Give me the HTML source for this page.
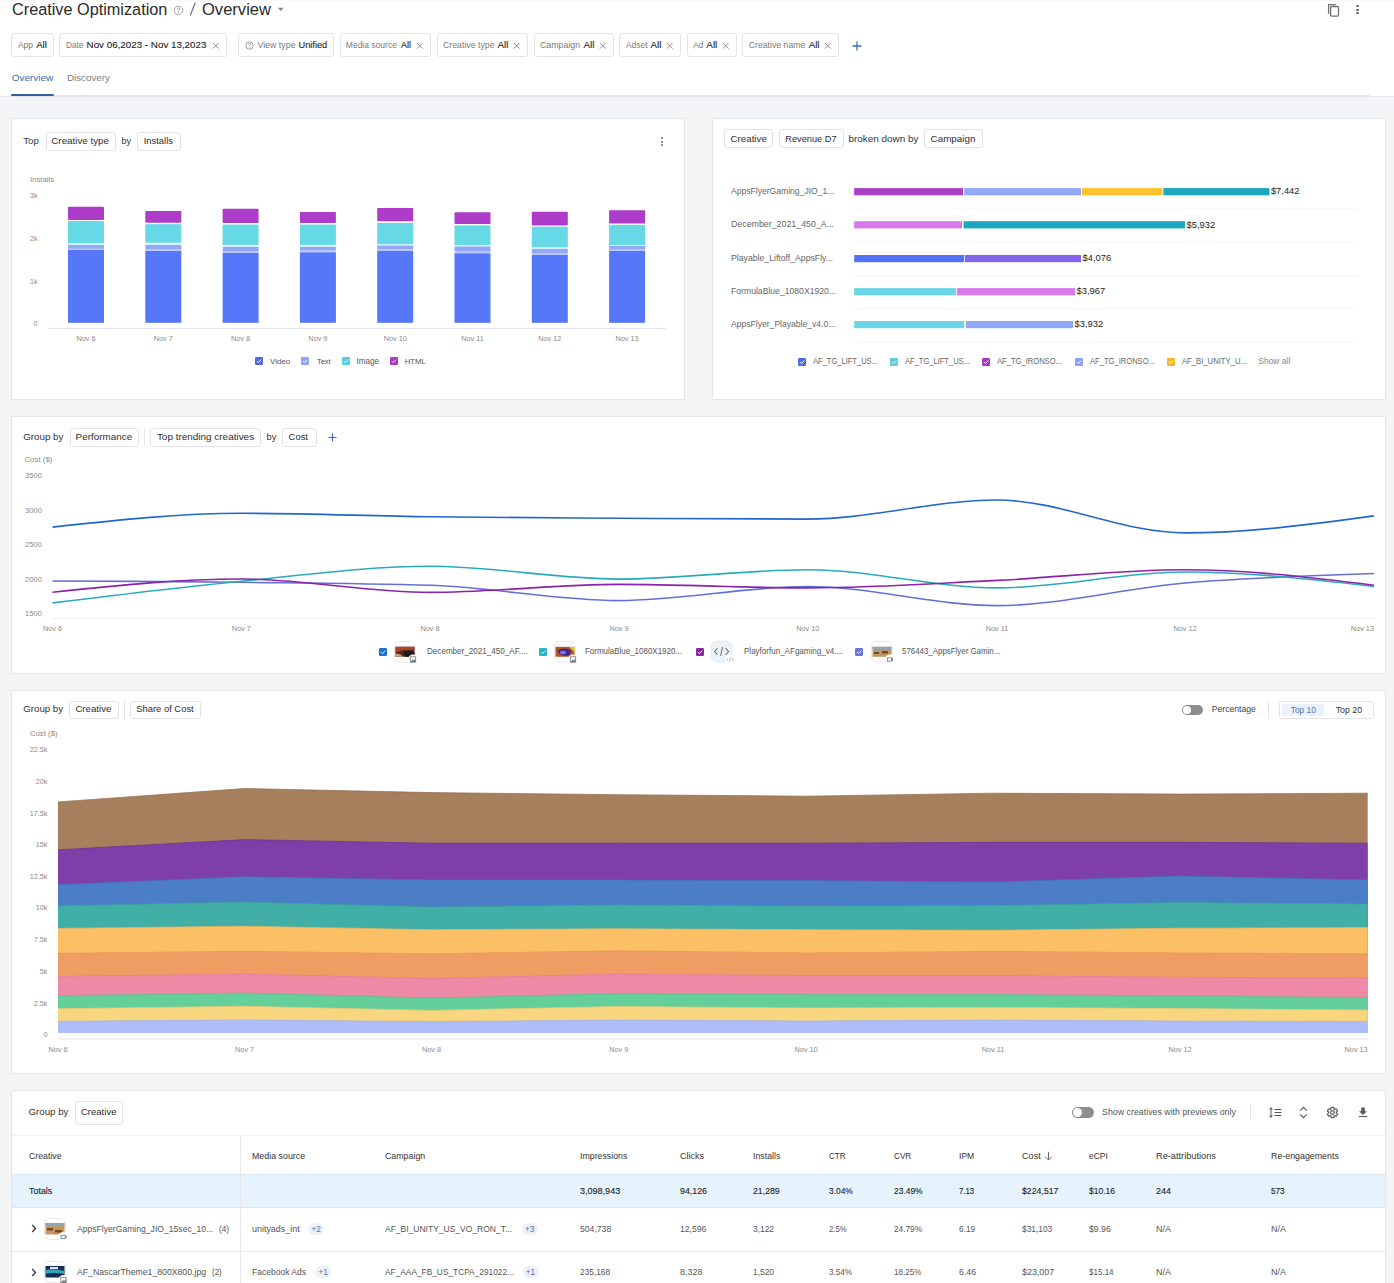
<!DOCTYPE html>
<html><head><meta charset="utf-8"><title>Creative Optimization</title>
<style>
html,body{margin:0;padding:0;}
body{width:1394px;height:1283px;overflow:hidden;position:relative;background:#f4f5f7;font-family:"Liberation Sans",sans-serif;}
.t{position:absolute;white-space:nowrap;}
.b{position:absolute;}
</style></head><body>
<div class="b" style="left:0px;top:0px;width:1394px;height:96px;background:#fff"></div>
<div class="b" style="left:0px;top:0px;width:1394px;height:1px;background:#f8f8f8"></div>
<div class="b" style="left:0px;top:96px;width:1394px;height:1px;background:#e6e8eb"></div>
<div class="b" style="left:11px;top:95px;width:1359px;height:2px;background:#e3e5e9"></div>
<div class="t" style="left:12.00px;top:1.00px;font-size:16.25px;line-height:16.25px;color:#2a2a2a;">Creative Optimization</div>
<svg class="b" style="left:173px;top:5px" width="11" height="11" viewBox="0 0 11 11"><circle cx="5.5" cy="5.5" r="4.3" fill="none" stroke="#9a9a9a" stroke-width="0.9"/><path d="M4.1 4.3 Q4.1 3 5.5 3 Q6.9 3 6.9 4.2 Q6.9 5 5.6 5.5 L5.6 6.4" fill="none" stroke="#9a9a9a" stroke-width="0.9"/><circle cx="5.6" cy="7.8" r="0.55" fill="#9a9a9a"/></svg>
<svg class="b" style="left:188px;top:2px" width="9" height="15"><path d="M7.2 0.8 L2.2 13.6" stroke="#6e6e6e" stroke-width="1.2"/></svg>
<div class="t" style="left:202.00px;top:2.00px;font-size:16.56px;line-height:16.56px;color:#2a2a2a;">Overview</div>
<svg class="b" style="left:277px;top:7px" width="8" height="5"><path d="M0.8 0.8 L6.8 0.8 L3.8 4 Z" fill="#8a8a8a"/></svg>
<svg class="b" style="left:1326px;top:2px" width="16" height="16" viewBox="0 0 16 16"><path d="M2.6 11.8 V2.6 H9.8" fill="none" stroke="#707070" stroke-width="1.3"/><rect x="4.6" y="4.5" width="7.9" height="9.6" rx="1" fill="none" stroke="#707070" stroke-width="1.3"/></svg>
<div class="b" style="left:1356.4px;top:5.0px;width:2.3px;height:2.3px;border-radius:50%;background:#6a6a6a"></div>
<div class="b" style="left:1356.4px;top:8.6px;width:2.3px;height:2.3px;border-radius:50%;background:#6a6a6a"></div>
<div class="b" style="left:1356.4px;top:12.0px;width:2.3px;height:2.3px;border-radius:50%;background:#6a6a6a"></div>
<div class="b" style="left:11px;top:33px;width:43px;height:24px;border:1px solid #e2e4e8;border-radius:3px;box-sizing:border-box;background:#fff"></div>
<div class="t" style="left:17.90px;top:41.00px;font-size:8.54px;line-height:8.54px;color:#7a7a7a;">App</div>
<div class="t" style="left:36.20px;top:40.00px;font-size:9.54px;line-height:9.54px;color:#222;-webkit-text-stroke:0.1px #222;">All</div>
<div class="b" style="left:59px;top:33px;width:168px;height:24px;border:1px solid #e2e4e8;border-radius:3px;box-sizing:border-box;background:#fff"></div>
<div class="t" style="left:65.90px;top:41.00px;font-size:8.33px;line-height:8.33px;color:#7a7a7a;">Date</div>
<div class="t" style="left:86.60px;top:40.00px;font-size:9.81px;line-height:9.81px;color:#222;-webkit-text-stroke:0.1px #222;">Nov 06,2023 - Nov 13,2023</div>
<svg class="b" style="left:211.6px;top:41.5px" width="7.5" height="7.5"><path d="M0.9 0.9 L6.6 6.6 M6.6 0.9 L0.9 6.6" stroke="#8c8c8c" stroke-width="1"/></svg>
<div class="b" style="left:238px;top:33px;width:96px;height:24px;border:1px solid #e2e4e8;border-radius:3px;box-sizing:border-box;background:#fff"></div>
<div class="t" style="left:257.40px;top:41.00px;font-size:8.85px;line-height:8.85px;color:#7a7a7a;">View type</div>
<div class="t" style="left:298.50px;top:41.00px;font-size:9.22px;line-height:9.22px;color:#222;-webkit-text-stroke:0.1px #222;">Unified</div>
<div class="b" style="left:340px;top:33px;width:91px;height:24px;border:1px solid #e2e4e8;border-radius:3px;box-sizing:border-box;background:#fff"></div>
<div class="t" style="left:345.80px;top:41.00px;font-size:8.53px;line-height:8.53px;color:#7a7a7a;">Media source</div>
<div class="t" style="left:400.90px;top:41.00px;font-size:9.09px;line-height:9.09px;color:#222;-webkit-text-stroke:0.1px #222;">All</div>
<svg class="b" style="left:415.5px;top:41.5px" width="7.5" height="7.5"><path d="M0.9 0.9 L6.6 6.6 M6.6 0.9 L0.9 6.6" stroke="#8c8c8c" stroke-width="1"/></svg>
<div class="b" style="left:437px;top:33px;width:91px;height:24px;border:1px solid #e2e4e8;border-radius:3px;box-sizing:border-box;background:#fff"></div>
<div class="t" style="left:443.00px;top:41.00px;font-size:8.76px;line-height:8.76px;color:#7a7a7a;">Creative type</div>
<div class="t" style="left:497.50px;top:40.00px;font-size:9.81px;line-height:9.81px;color:#222;-webkit-text-stroke:0.1px #222;">All</div>
<svg class="b" style="left:512.5px;top:41.5px" width="7.5" height="7.5"><path d="M0.9 0.9 L6.6 6.6 M6.6 0.9 L0.9 6.6" stroke="#8c8c8c" stroke-width="1"/></svg>
<div class="b" style="left:534px;top:33px;width:80px;height:24px;border:1px solid #e2e4e8;border-radius:3px;box-sizing:border-box;background:#fff"></div>
<div class="t" style="left:540.00px;top:41.00px;font-size:8.82px;line-height:8.82px;color:#7a7a7a;">Campaign</div>
<div class="t" style="left:583.50px;top:40.00px;font-size:9.9px;line-height:9.9px;color:#222;-webkit-text-stroke:0.1px #222;">All</div>
<svg class="b" style="left:598.8px;top:41.5px" width="7.5" height="7.5"><path d="M0.9 0.9 L6.6 6.6 M6.6 0.9 L0.9 6.6" stroke="#8c8c8c" stroke-width="1"/></svg>
<div class="b" style="left:619px;top:33px;width:62px;height:24px;border:1px solid #e2e4e8;border-radius:3px;box-sizing:border-box;background:#fff"></div>
<div class="t" style="left:626.00px;top:41.00px;font-size:8.41px;line-height:8.41px;color:#7a7a7a;">Adset</div>
<div class="t" style="left:650.50px;top:40.00px;font-size:9.72px;line-height:9.72px;color:#222;-webkit-text-stroke:0.1px #222;">All</div>
<svg class="b" style="left:665.5px;top:41.5px" width="7.5" height="7.5"><path d="M0.9 0.9 L6.6 6.6 M6.6 0.9 L0.9 6.6" stroke="#8c8c8c" stroke-width="1"/></svg>
<div class="b" style="left:687px;top:33px;width:50px;height:24px;border:1px solid #e2e4e8;border-radius:3px;box-sizing:border-box;background:#fff"></div>
<div class="t" style="left:693.20px;top:42.00px;font-size:8.26px;line-height:8.26px;color:#7a7a7a;">Ad</div>
<div class="t" style="left:706.30px;top:40.00px;font-size:9.9px;line-height:9.9px;color:#222;-webkit-text-stroke:0.1px #222;">All</div>
<svg class="b" style="left:721.5px;top:41.5px" width="7.5" height="7.5"><path d="M0.9 0.9 L6.6 6.6 M6.6 0.9 L0.9 6.6" stroke="#8c8c8c" stroke-width="1"/></svg>
<div class="b" style="left:742px;top:33px;width:97px;height:24px;border:1px solid #e2e4e8;border-radius:3px;box-sizing:border-box;background:#fff"></div>
<div class="t" style="left:748.70px;top:41.00px;font-size:8.72px;line-height:8.72px;color:#7a7a7a;">Creative name</div>
<div class="t" style="left:808.70px;top:40.00px;font-size:9.72px;line-height:9.72px;color:#222;-webkit-text-stroke:0.1px #222;">All</div>
<svg class="b" style="left:823.8px;top:41.5px" width="7.5" height="7.5"><path d="M0.9 0.9 L6.6 6.6 M6.6 0.9 L0.9 6.6" stroke="#8c8c8c" stroke-width="1"/></svg>
<svg class="b" style="left:244.5px;top:40.5px" width="9" height="9" viewBox="0 0 11 11"><circle cx="5.5" cy="5.5" r="4.5" fill="none" stroke="#8a8a8a" stroke-width="1"/><path d="M4.1 4.3 Q4.1 3 5.5 3 Q6.9 3 6.9 4.2 Q6.9 5 5.6 5.5 L5.6 6.4" fill="none" stroke="#8a8a8a" stroke-width="1"/><circle cx="5.6" cy="7.9" r="0.6" fill="#8a8a8a"/></svg>
<svg class="b" style="left:851.5px;top:40.5px" width="10" height="10"><path d="M5 0.5 V9.5 M0.5 5 H9.5" stroke="#3d6db5" stroke-width="1.3"/></svg>
<div class="t" style="left:11.70px;top:73.00px;font-size:9.96px;line-height:9.96px;color:#3f6aa6;">Overview</div>
<div class="t" style="left:67.00px;top:73.00px;font-size:9.77px;line-height:9.77px;color:#808080;">Discovery</div>
<div class="b" style="left:11px;top:94px;width:43px;height:2.2px;background:#2f5f9e;border-radius:1px"></div>
<div class="b" style="left:11px;top:118px;width:674px;height:282px;background:#fff;border:1px solid #e3e5e9;border-radius:2px;box-sizing:border-box"></div>
<div class="t" style="left:23.30px;top:136.00px;font-size:9.61px;line-height:9.61px;color:#333;">Top</div>
<div class="b" style="left:46px;top:132px;width:70px;height:19px;border:1px solid #e1e3e7;border-radius:3px;box-sizing:border-box;background:#fff"></div><div class="t" style="left:51.30px;top:136.00px;font-size:9.81px;line-height:9.81px;color:#2e2e2e;">Creative type</div>
<div class="t" style="left:121.40px;top:137.00px;font-size:9.09px;line-height:9.09px;color:#333;">by</div>
<div class="b" style="left:137px;top:132px;width:44px;height:19px;border:1px solid #e1e3e7;border-radius:3px;box-sizing:border-box;background:#fff"></div><div class="t" style="left:143.70px;top:136.00px;font-size:9.41px;line-height:9.41px;color:#2e2e2e;">Installs</div>
<div class="b" style="left:660.60px;top:137.00px;width:2.2px;height:2.2px;border-radius:50%;background:#666"></div><div class="b" style="left:660.60px;top:140.50px;width:2.2px;height:2.2px;border-radius:50%;background:#666"></div><div class="b" style="left:660.60px;top:143.80px;width:2.2px;height:2.2px;border-radius:50%;background:#666"></div>
<div class="t" style="left:30.10px;top:176.00px;font-size:7.68px;line-height:7.68px;color:#8a8a8a;">Installs</div>
<div class="t" style="left:29.90px;top:192.00px;font-size:7.2px;line-height:7.2px;color:#8a8a8a;">3k</div>
<div class="t" style="left:29.90px;top:235.00px;font-size:7.2px;line-height:7.2px;color:#8a8a8a;">2k</div>
<div class="t" style="left:29.90px;top:278.00px;font-size:7.2px;line-height:7.2px;color:#8a8a8a;">1k</div>
<div class="t" style="left:33.50px;top:320.00px;font-size:7.2px;line-height:7.2px;color:#8a8a8a;">0</div>
<svg class="b" style="left:0;top:0" width="700" height="400"><rect x="48" y="328" width="618" height="1" fill="#e0e5f2"/><rect x="68.0" y="249.9" width="36" height="72.9" fill="#5577f8"/><rect x="68.0" y="248.8" width="36" height="1.1" fill="#b9c6fb"/><rect x="68.0" y="245" width="36" height="3.8" fill="#92a7f7"/><rect x="68.0" y="243.2" width="36" height="1.8" fill="#d6f4f9"/><rect x="68.0" y="221.1" width="36" height="22.1" fill="#67d8e6"/><rect x="68.0" y="206.8" width="36" height="13.2" rx="1" fill="#ad3dc9"/><rect x="145.3" y="250.9" width="36" height="71.9" fill="#5577f8"/><rect x="145.3" y="249" width="36" height="1.9" fill="#b9c6fb"/><rect x="145.3" y="244.9" width="36" height="4.1" fill="#92a7f7"/><rect x="145.3" y="242.7" width="36" height="2.2" fill="#d6f4f9"/><rect x="145.3" y="224.2" width="36" height="18.5" fill="#67d8e6"/><rect x="145.3" y="211.1" width="36" height="11.6" rx="1" fill="#ad3dc9"/><rect x="222.6" y="253" width="36" height="69.8" fill="#5577f8"/><rect x="222.6" y="251" width="36" height="2.0" fill="#b9c6fb"/><rect x="222.6" y="246.7" width="36" height="4.3" fill="#92a7f7"/><rect x="222.6" y="244.9" width="36" height="1.8" fill="#d6f4f9"/><rect x="222.6" y="224.6" width="36" height="20.3" fill="#67d8e6"/><rect x="222.6" y="208.8" width="36" height="14.3" rx="1" fill="#ad3dc9"/><rect x="299.9" y="252.2" width="36" height="70.6" fill="#5577f8"/><rect x="299.9" y="250.4" width="36" height="1.8" fill="#b9c6fb"/><rect x="299.9" y="246.7" width="36" height="3.7" fill="#92a7f7"/><rect x="299.9" y="244.9" width="36" height="1.8" fill="#d6f4f9"/><rect x="299.9" y="224.6" width="36" height="20.3" fill="#67d8e6"/><rect x="299.9" y="211.9" width="36" height="11.1" rx="1" fill="#ad3dc9"/><rect x="377.2" y="251" width="36" height="71.8" fill="#5577f8"/><rect x="377.2" y="249.2" width="36" height="1.8" fill="#b9c6fb"/><rect x="377.2" y="245.3" width="36" height="3.9" fill="#92a7f7"/><rect x="377.2" y="244.1" width="36" height="1.2" fill="#d6f4f9"/><rect x="377.2" y="222.9" width="36" height="21.2" fill="#67d8e6"/><rect x="377.2" y="207.9" width="36" height="13.3" rx="1" fill="#ad3dc9"/><rect x="454.5" y="253.2" width="36" height="69.6" fill="#5577f8"/><rect x="454.5" y="251" width="36" height="2.2" fill="#b9c6fb"/><rect x="454.5" y="246.3" width="36" height="4.7" fill="#92a7f7"/><rect x="454.5" y="245" width="36" height="1.3" fill="#d6f4f9"/><rect x="454.5" y="225.4" width="36" height="19.6" fill="#67d8e6"/><rect x="454.5" y="212.3" width="36" height="11.6" rx="1" fill="#ad3dc9"/><rect x="531.8" y="255" width="36" height="67.8" fill="#5577f8"/><rect x="531.8" y="253.2" width="36" height="1.8" fill="#b9c6fb"/><rect x="531.8" y="248.7" width="36" height="4.5" fill="#92a7f7"/><rect x="531.8" y="247.2" width="36" height="1.5" fill="#d6f4f9"/><rect x="531.8" y="226.7" width="36" height="20.5" fill="#67d8e6"/><rect x="531.8" y="211.8" width="36" height="13.6" rx="1" fill="#ad3dc9"/><rect x="609.1" y="251" width="36" height="71.8" fill="#5577f8"/><rect x="609.1" y="249.6" width="36" height="1.4" fill="#b9c6fb"/><rect x="609.1" y="245.9" width="36" height="3.7" fill="#92a7f7"/><rect x="609.1" y="245" width="36" height="0.9" fill="#d6f4f9"/><rect x="609.1" y="224.8" width="36" height="20.2" fill="#67d8e6"/><rect x="609.1" y="210.3" width="36" height="13.1" rx="1" fill="#ad3dc9"/></svg>
<div class="t" style="left:76.47px;top:335.00px;font-size:7.3px;line-height:7.3px;color:#8a8a8a;">Nov 6</div>
<div class="t" style="left:153.77px;top:335.00px;font-size:7.3px;line-height:7.3px;color:#8a8a8a;">Nov 7</div>
<div class="t" style="left:231.07px;top:335.00px;font-size:7.3px;line-height:7.3px;color:#8a8a8a;">Nov 8</div>
<div class="t" style="left:308.37px;top:335.00px;font-size:7.3px;line-height:7.3px;color:#8a8a8a;">Nov 9</div>
<div class="t" style="left:383.64px;top:335.00px;font-size:7.3px;line-height:7.3px;color:#8a8a8a;">Nov 10</div>
<div class="t" style="left:461.21px;top:335.00px;font-size:7.3px;line-height:7.3px;color:#8a8a8a;">Nov 11</div>
<div class="t" style="left:538.24px;top:335.00px;font-size:7.3px;line-height:7.3px;color:#8a8a8a;">Nov 12</div>
<div class="t" style="left:615.54px;top:335.00px;font-size:7.3px;line-height:7.3px;color:#8a8a8a;">Nov 13</div>
<svg class="b" style="left:255px;top:357px" width="8" height="8" viewBox="0 0 8 8"><rect x="0" y="0" width="8" height="8" rx="1.2" fill="#5068e0"/><path d="M1.9 4.1 L3.4 5.6 L6.2 2.6" fill="none" stroke="#fff" stroke-width="1"/></svg>
<div class="t" style="left:270.00px;top:358.00px;font-size:7.99px;line-height:7.99px;color:#555;">Video</div>
<svg class="b" style="left:301px;top:357px" width="8" height="8" viewBox="0 0 8 8"><rect x="0" y="0" width="8" height="8" rx="1.2" fill="#8fa2f3"/><path d="M1.9 4.1 L3.4 5.6 L6.2 2.6" fill="none" stroke="#fff" stroke-width="1"/></svg>
<div class="t" style="left:316.90px;top:358.00px;font-size:7.52px;line-height:7.52px;color:#555;">Text</div>
<svg class="b" style="left:342px;top:357px" width="8" height="8" viewBox="0 0 8 8"><rect x="0" y="0" width="8" height="8" rx="1.2" fill="#5ccde0"/><path d="M1.9 4.1 L3.4 5.6 L6.2 2.6" fill="none" stroke="#fff" stroke-width="1"/></svg>
<div class="t" style="left:356.50px;top:358.00px;font-size:8.13px;line-height:8.13px;color:#555;">Image</div>
<svg class="b" style="left:390px;top:357px" width="8" height="8" viewBox="0 0 8 8"><rect x="0" y="0" width="8" height="8" rx="1.2" fill="#a63bc2"/><path d="M1.9 4.1 L3.4 5.6 L6.2 2.6" fill="none" stroke="#fff" stroke-width="1"/></svg>
<div class="t" style="left:404.70px;top:358.00px;font-size:7.79px;line-height:7.79px;color:#555;">HTML</div>
<div class="b" style="left:712px;top:118px;width:674px;height:282px;background:#fff;border:1px solid #e3e5e9;border-radius:2px;box-sizing:border-box"></div>
<div class="b" style="left:724px;top:129px;width:49px;height:19px;border:1px solid #e1e3e7;border-radius:3px;box-sizing:border-box;background:#fff"></div><div class="t" style="left:730.60px;top:134.00px;font-size:9.72px;line-height:9.72px;color:#2e2e2e;">Creative</div>
<div class="b" style="left:779px;top:129px;width:65px;height:19px;border:1px solid #e1e3e7;border-radius:3px;box-sizing:border-box;background:#fff"></div><div class="t" style="left:785.30px;top:135.00px;font-size:9.23px;line-height:9.23px;color:#2e2e2e;">Revenue D7</div>
<div class="t" style="left:848.40px;top:134.00px;font-size:9.94px;line-height:9.94px;color:#333;">broken down by</div>
<div class="b" style="left:924px;top:129px;width:59px;height:19px;border:1px solid #e1e3e7;border-radius:3px;box-sizing:border-box;background:#fff"></div><div class="t" style="left:930.60px;top:134.00px;font-size:9.83px;line-height:9.83px;color:#2e2e2e;">Campaign</div>
<svg class="b" style="left:0;top:0" width="1394" height="400"><rect x="854" y="208.3" width="503" height="1" fill="#f4f5f6"/><rect x="854" y="241.6" width="503" height="1" fill="#f4f5f6"/><rect x="854" y="275.0" width="503" height="1" fill="#f4f5f6"/><rect x="854" y="308.2" width="503" height="1" fill="#f4f5f6"/><rect x="854" y="341.7" width="503" height="1" fill="#f4f5f6"/><rect x="854.2" y="188.1" width="108.8" height="7.2" fill="#a93fc7"/><rect x="964.2" y="188.1" width="116.8" height="7.2" fill="#94a8f8"/><rect x="1082" y="188.1" width="80.4" height="7.2" fill="#fcc12f"/><rect x="1163.3" y="188.1" width="106.1" height="7.2" fill="#1ba8bf"/><rect x="854.2" y="221.2" width="107.8" height="7.2" fill="#d87aee"/><rect x="963.6" y="221.2" width="221.4" height="7.2" fill="#1ba8bf"/><rect x="854.2" y="255.0" width="110.0" height="7.2" fill="#5173f5"/><rect x="965" y="255.0" width="116.0" height="7.2" fill="#8264ee"/><rect x="854.2" y="288.1" width="101.8" height="7.2" fill="#68d6e6"/><rect x="957" y="288.1" width="118.0" height="7.2" fill="#d87aee"/><rect x="854.2" y="321.0" width="109.8" height="7.2" fill="#68d6e6"/><rect x="965.7" y="321.0" width="107.3" height="7.2" fill="#94a8f8"/></svg>
<div class="t" style="left:731.00px;top:187.00px;font-size:8.6px;line-height:8.6px;color:#666;transform:scaleX(0.9979);transform-origin:0 0;">AppsFlyerGaming_JIO_1...</div>
<div class="t" style="left:1270.90px;top:187.00px;font-size:9.35px;line-height:9.35px;color:#222;">$7,442</div>
<div class="t" style="left:731.00px;top:220.00px;font-size:8.6px;line-height:8.6px;color:#666;transform:scaleX(1.0269);transform-origin:0 0;">December_2021_450_A...</div>
<div class="t" style="left:1186.50px;top:221.00px;font-size:9.35px;line-height:9.35px;color:#222;">$5,932</div>
<div class="t" style="left:731.00px;top:254.00px;font-size:8.6px;line-height:8.6px;color:#666;transform:scaleX(1.0106);transform-origin:0 0;">Playable_Liftoff_AppsFly...</div>
<div class="t" style="left:1082.50px;top:254.00px;font-size:9.35px;line-height:9.35px;color:#222;">$4,076</div>
<div class="t" style="left:731.00px;top:287.00px;font-size:8.6px;line-height:8.6px;color:#666;transform:scaleX(1.0038);transform-origin:0 0;">FormulaBlue_1080X1920...</div>
<div class="t" style="left:1076.50px;top:287.00px;font-size:9.35px;line-height:9.35px;color:#222;">$3,967</div>
<div class="t" style="left:731.00px;top:320.00px;font-size:8.6px;line-height:8.6px;color:#666;transform:scaleX(0.9982);transform-origin:0 0;">AppsFlyer_Playable_v4.0...</div>
<div class="t" style="left:1074.50px;top:320.00px;font-size:9.35px;line-height:9.35px;color:#222;">$3,932</div>
<svg class="b" style="left:798px;top:357.5px" width="8" height="8" viewBox="0 0 8 8"><rect x="0" y="0" width="8" height="8" rx="1.2" fill="#4f6be0"/><path d="M1.9 4.1 L3.4 5.6 L6.2 2.6" fill="none" stroke="#fff" stroke-width="1"/></svg>
<div class="t" style="left:813.20px;top:358.00px;font-size:8.2px;line-height:8.2px;color:#666;transform:scaleX(0.9203);transform-origin:0 0;">AF_TG_LIFT_US...</div>
<svg class="b" style="left:890px;top:357.5px" width="8" height="8" viewBox="0 0 8 8"><rect x="0" y="0" width="8" height="8" rx="1.2" fill="#5fcde0"/><path d="M1.9 4.1 L3.4 5.6 L6.2 2.6" fill="none" stroke="#fff" stroke-width="1"/></svg>
<div class="t" style="left:905.20px;top:358.00px;font-size:8.2px;line-height:8.2px;color:#666;transform:scaleX(0.9203);transform-origin:0 0;">AF_TG_LIFT_US...</div>
<svg class="b" style="left:982px;top:357.5px" width="8" height="8" viewBox="0 0 8 8"><rect x="0" y="0" width="8" height="8" rx="1.2" fill="#a53ac0"/><path d="M1.9 4.1 L3.4 5.6 L6.2 2.6" fill="none" stroke="#fff" stroke-width="1"/></svg>
<div class="t" style="left:997.20px;top:358.00px;font-size:8.2px;line-height:8.2px;color:#666;transform:scaleX(0.9263);transform-origin:0 0;">AF_TG_IRONSO...</div>
<svg class="b" style="left:1075px;top:357.5px" width="8" height="8" viewBox="0 0 8 8"><rect x="0" y="0" width="8" height="8" rx="1.2" fill="#8fa0f0"/><path d="M1.9 4.1 L3.4 5.6 L6.2 2.6" fill="none" stroke="#fff" stroke-width="1"/></svg>
<div class="t" style="left:1090.20px;top:358.00px;font-size:8.2px;line-height:8.2px;color:#666;transform:scaleX(0.9263);transform-origin:0 0;">AF_TG_IRONSO...</div>
<svg class="b" style="left:1167px;top:357.5px" width="8" height="8" viewBox="0 0 8 8"><rect x="0" y="0" width="8" height="8" rx="1.2" fill="#f5b82e"/><path d="M1.9 4.1 L3.4 5.6 L6.2 2.6" fill="none" stroke="#fff" stroke-width="1"/></svg>
<div class="t" style="left:1182.20px;top:358.00px;font-size:8.2px;line-height:8.2px;color:#666;transform:scaleX(0.9384);transform-origin:0 0;">AF_BI_UNITY_U...</div>
<div class="t" style="left:1258.30px;top:357.00px;font-size:8.47px;line-height:8.47px;color:#888;">Show all</div>
<div class="b" style="left:11px;top:416px;width:1375px;height:258px;background:#fff;border:1px solid #e3e5e9;border-radius:2px;box-sizing:border-box"></div>
<div class="t" style="left:23.20px;top:432.00px;font-size:9.77px;line-height:9.77px;color:#333;">Group by</div>
<div class="b" style="left:70px;top:428px;width:69px;height:19px;border:1px solid #e1e3e7;border-radius:3px;box-sizing:border-box;background:#fff"></div><div class="t" style="left:75.60px;top:432.00px;font-size:9.89px;line-height:9.89px;color:#2e2e2e;">Performance</div>
<div class="b" style="left:144px;top:428px;width:1px;height:18px;background:#e6e7ea"></div>
<div class="b" style="left:150px;top:428px;width:111px;height:19px;border:1px solid #e1e3e7;border-radius:3px;box-sizing:border-box;background:#fff"></div><div class="t" style="left:156.90px;top:432.00px;font-size:9.95px;line-height:9.95px;color:#2e2e2e;">Top trending creatives</div>
<div class="t" style="left:266.60px;top:433.00px;font-size:9.28px;line-height:9.28px;color:#333;">by</div>
<div class="b" style="left:282px;top:428px;width:35px;height:19px;border:1px solid #e1e3e7;border-radius:3px;box-sizing:border-box;background:#fff"></div><div class="t" style="left:288.60px;top:432.00px;font-size:9.44px;line-height:9.44px;color:#2e2e2e;">Cost</div>
<svg class="b" style="left:328px;top:433px" width="9" height="9"><path d="M4.5 0.5 V8.5 M0.5 4.5 H8.5" stroke="#3d6db5" stroke-width="1.2"/></svg>
<div class="t" style="left:24.40px;top:456.00px;font-size:7.9px;line-height:7.9px;color:#8a8a8a;">Cost ($)</div>
<div class="t" style="left:25.00px;top:472.00px;font-size:7.64px;line-height:7.64px;color:#8a8a8a;">3500</div>
<div class="t" style="left:25.00px;top:507.00px;font-size:7.64px;line-height:7.64px;color:#8a8a8a;">3000</div>
<div class="t" style="left:25.00px;top:541.00px;font-size:7.64px;line-height:7.64px;color:#8a8a8a;">2500</div>
<div class="t" style="left:25.00px;top:576.00px;font-size:7.64px;line-height:7.64px;color:#8a8a8a;">2000</div>
<div class="t" style="left:25.00px;top:610.00px;font-size:7.64px;line-height:7.64px;color:#8a8a8a;">1500</div>
<svg class="b" style="left:0;top:400px" width="1394" height="260" viewBox="0 400 1394 260"><rect x="52" y="618" width="1322" height="1" fill="#eceef1"/><path d="M52.50,527.10 C115.47,520.20 178.43,513.30 241.40,513.30 C304.27,513.30 367.13,515.98 430.00,516.80 C493.00,517.62 556.00,517.82 619.00,518.20 C681.90,518.58 744.80,519.10 807.70,519.10 C870.80,519.10 933.90,500.00 997.00,500.00 C1059.67,500.00 1122.33,532.90 1185.00,532.90 C1248.00,532.90 1311.00,524.40 1374.00,515.90" fill="none" stroke="#2168cd" stroke-width="1.6"/><path d="M52.50,581.00 C115.47,581.29 178.43,581.58 241.40,582.30 C304.27,583.02 367.13,583.30 430.00,585.30 C493.00,587.30 556.00,600.60 619.00,600.60 C681.90,600.60 744.80,586.50 807.70,586.50 C870.80,586.50 933.90,605.60 997.00,605.60 C1059.67,605.60 1122.33,588.35 1185.00,583.00 C1248.00,577.62 1311.00,575.56 1374.00,573.50" fill="none" stroke="#6470d8" stroke-width="1.6"/><path d="M52.50,602.90 C115.47,595.11 178.43,587.32 241.40,581.20 C304.27,575.09 367.13,566.20 430.00,566.20 C493.00,566.20 556.00,579.10 619.00,579.10 C681.90,579.10 744.80,569.70 807.70,569.70 C870.80,569.70 933.90,587.90 997.00,587.90 C1059.67,587.90 1122.33,572.00 1185.00,572.00 C1248.00,572.00 1311.00,579.25 1374.00,586.50" fill="none" stroke="#2aabbb" stroke-width="1.6"/><path d="M52.50,592.20 C115.47,585.60 178.43,579.00 241.40,579.00 C304.27,579.00 367.13,592.40 430.00,592.40 C493.00,592.40 556.00,584.40 619.00,584.40 C681.90,584.40 744.80,587.90 807.70,587.90 C870.80,587.90 933.90,583.45 997.00,580.40 C1059.67,577.37 1122.33,569.70 1185.00,569.70 C1248.00,569.70 1311.00,577.50 1374.00,585.30" fill="none" stroke="#8c22aa" stroke-width="1.6"/></svg>
<div class="t" style="left:42.97px;top:625.00px;font-size:7.3px;line-height:7.3px;color:#8a8a8a;">Nov 6</div>
<div class="t" style="left:231.87px;top:625.00px;font-size:7.3px;line-height:7.3px;color:#8a8a8a;">Nov 7</div>
<div class="t" style="left:420.47px;top:625.00px;font-size:7.3px;line-height:7.3px;color:#8a8a8a;">Nov 8</div>
<div class="t" style="left:609.47px;top:625.00px;font-size:7.3px;line-height:7.3px;color:#8a8a8a;">Nov 9</div>
<div class="t" style="left:796.14px;top:625.00px;font-size:7.3px;line-height:7.3px;color:#8a8a8a;">Nov 10</div>
<div class="t" style="left:985.71px;top:625.00px;font-size:7.3px;line-height:7.3px;color:#8a8a8a;">Nov 11</div>
<div class="t" style="left:1173.44px;top:625.00px;font-size:7.3px;line-height:7.3px;color:#8a8a8a;">Nov 12</div>
<div class="t" style="left:1350.87px;top:625.00px;font-size:7.3px;line-height:7.3px;color:#8a8a8a;">Nov 13</div>
<svg class="b" style="left:379px;top:648px" width="8" height="8" viewBox="0 0 8 8"><rect x="0" y="0" width="8" height="8" rx="1.2" fill="#1f6fd0"/><path d="M1.9 4.1 L3.4 5.6 L6.2 2.6" fill="none" stroke="#fff" stroke-width="1"/></svg>
<svg class="b" style="left:394px;top:641px" width="27" height="24" viewBox="0 0 27 24"><rect x="0.5" y="0.5" width="20.5" height="20.5" rx="5" fill="#fff" stroke="#e6e8ec"/><rect x="1.5" y="5.8" width="19" height="10" fill="#5a2a1f"/><path d="M1.5 5.8 H20.5 V9 Q12 8 1.5 11 Z" fill="#a8452c"/><path d="M1.5 13 Q6 12 9 15.8 H1.5 Z" fill="#c9a070"/><path d="M9 11 Q14 9 20.5 11 V15.8 H11 Z" fill="#1e1a1a"/><circle cx="19" cy="18.5" r="5" fill="#fff"/><rect x="16.3" y="15.8" width="5.4" height="5.4" fill="none" stroke="#777" stroke-width="0.8"/><path d="M16.6 20.9 L18.5 18.5 L19.6 19.6 L21.4 17.8 V20.9 Z" fill="#777"/></svg>
<div class="t" style="left:426.50px;top:647.00px;font-size:8.4px;line-height:8.4px;color:#555;transform:scaleX(0.9656);transform-origin:0 0;">December_2021_450_AF....</div>
<svg class="b" style="left:539px;top:648px" width="8" height="8" viewBox="0 0 8 8"><rect x="0" y="0" width="8" height="8" rx="1.2" fill="#29b3c4"/><path d="M1.9 4.1 L3.4 5.6 L6.2 2.6" fill="none" stroke="#fff" stroke-width="1"/></svg>
<svg class="b" style="left:554px;top:641px" width="27" height="24" viewBox="0 0 27 24"><rect x="0.5" y="0.5" width="20.5" height="20.5" rx="5" fill="#fff" stroke="#e6e8ec"/><rect x="1.5" y="5.8" width="19" height="10" fill="#b8561c"/><path d="M4 9 Q10 6 17 9 L16 14 Q10 16 5 13 Z" fill="#3b2a8e"/><path d="M15 6 L20.5 6 L20.5 11 Z" fill="#d6d33a"/><ellipse cx="9" cy="11.5" rx="3" ry="1.8" fill="#8a6fe0"/><circle cx="19" cy="18.5" r="5" fill="#fff"/><rect x="16.3" y="15.8" width="5.4" height="5.4" fill="none" stroke="#777" stroke-width="0.8"/><path d="M16.6 20.9 L18.5 18.5 L19.6 19.6 L21.4 17.8 V20.9 Z" fill="#777"/></svg>
<div class="t" style="left:584.70px;top:647.00px;font-size:8.4px;line-height:8.4px;color:#555;transform:scaleX(0.9514);transform-origin:0 0;">FormulaBlue_1080X1920...</div>
<svg class="b" style="left:696px;top:648px" width="8" height="8" viewBox="0 0 8 8"><rect x="0" y="0" width="8" height="8" rx="1.2" fill="#8e24aa"/><path d="M1.9 4.1 L3.4 5.6 L6.2 2.6" fill="none" stroke="#fff" stroke-width="1"/></svg>
<svg class="b" style="left:711px;top:641px" width="27" height="24" viewBox="0 0 27 24"><rect x="0.5" y="0.5" width="20.5" height="20.5" rx="5" fill="#edf2f7" stroke="#e3e8ee"/><path d="M6.5 7.2 L3.6 10.5 L6.5 13.8 M14.6 7.2 L17.5 10.5 L14.6 13.8 M11.6 6 L9.6 15" fill="none" stroke="#6a7480" stroke-width="1.1"/><circle cx="19" cy="18.5" r="5" fill="#fff"/><path d="M17 17 L15.8 18.4 L17 19.8 M21 17 L22.2 18.4 L21 19.8 M19.6 16.4 L18.4 20.4" fill="none" stroke="#8a8a8a" stroke-width="0.6"/></svg>
<div class="t" style="left:744.00px;top:647.00px;font-size:8.4px;line-height:8.4px;color:#555;transform:scaleX(0.9589);transform-origin:0 0;">Playforfun_AFgaming_v4....</div>
<svg class="b" style="left:855px;top:648px" width="8" height="8" viewBox="0 0 8 8"><rect x="0" y="0" width="8" height="8" rx="1.2" fill="#6a75d8"/><path d="M1.9 4.1 L3.4 5.6 L6.2 2.6" fill="none" stroke="#fff" stroke-width="1"/></svg>
<svg class="b" style="left:871px;top:641px" width="27" height="24" viewBox="0 0 27 24"><rect x="0.5" y="0.5" width="20.5" height="20.5" rx="5" fill="#fff" stroke="#e6e8ec"/><rect x="1.5" y="5.8" width="19" height="10" fill="#c49563"/><path d="M1.5 5.8 H20.5 V8 H1.5 Z" fill="#8aa7c4"/><path d="M3 11 H8 V13 H3 Z M11 10 H17 V12.5 H11 Z" fill="#6b4a2e"/><circle cx="19" cy="18.5" r="5" fill="#fff"/><rect x="16.5" y="16.8" width="4.2" height="3.4" fill="none" stroke="#777" stroke-width="0.8"/><path d="M20.7 17.6 L22 17 V20 L20.7 19.4" fill="#777"/></svg>
<div class="t" style="left:902.40px;top:647.00px;font-size:8.4px;line-height:8.4px;color:#555;transform:scaleX(0.9427);transform-origin:0 0;">576443_AppsFlyer Gamin...</div>
<div class="b" style="left:11px;top:690px;width:1375px;height:384px;background:#fff;border:1px solid #e3e5e9;border-radius:2px;box-sizing:border-box"></div>
<div class="t" style="left:23.30px;top:704.00px;font-size:9.68px;line-height:9.68px;color:#333;">Group by</div>
<div class="b" style="left:69px;top:701px;width:50px;height:18px;border:1px solid #e1e3e7;border-radius:3px;box-sizing:border-box;background:#fff"></div><div class="t" style="left:75.40px;top:704.00px;font-size:9.67px;line-height:9.67px;color:#2e2e2e;">Creative</div>
<div class="b" style="left:124px;top:700px;width:1px;height:20px;background:#e6e7ea"></div>
<div class="b" style="left:130px;top:701px;width:71px;height:18px;border:1px solid #e1e3e7;border-radius:3px;box-sizing:border-box;background:#fff"></div><div class="t" style="left:136.20px;top:704.00px;font-size:9.42px;line-height:9.42px;color:#2e2e2e;">Share of Cost</div>
<div class="b" style="left:1182px;top:705px;width:21px;height:10px;background:#8d8d8d;border-radius:5px"></div>
<div class="b" style="left:1183px;top:706px;width:8px;height:8px;background:#fff;border-radius:50%"></div>
<div class="t" style="left:1211.80px;top:705.00px;font-size:8.64px;line-height:8.64px;color:#444;">Percentage</div>
<div class="b" style="left:1268px;top:701px;width:1px;height:18px;background:#e6e7ea"></div>
<div class="b" style="left:1279px;top:701px;width:95px;height:18px;border:1px solid #e1e3e7;border-radius:3px;box-sizing:border-box;background:#fff"></div>
<div class="b" style="left:1282px;top:704px;width:42px;height:12px;background:#e9f1fa;border-radius:2px"></div>
<div class="t" style="left:1290.70px;top:706.00px;font-size:8.43px;line-height:8.43px;color:#4a79b8;">Top 10</div>
<div class="t" style="left:1335.70px;top:706.00px;font-size:8.83px;line-height:8.83px;color:#333;">Top 20</div>
<div class="t" style="left:29.90px;top:730.00px;font-size:7.79px;line-height:7.79px;color:#8a8a8a;">Cost ($)</div>
<div class="t" style="left:29.79px;top:746.00px;font-size:7.2px;line-height:7.2px;color:#8a8a8a;">22.5k</div>
<div class="t" style="left:35.79px;top:778.00px;font-size:7.2px;line-height:7.2px;color:#8a8a8a;">20k</div>
<div class="t" style="left:29.79px;top:810.00px;font-size:7.2px;line-height:7.2px;color:#8a8a8a;">17.5k</div>
<div class="t" style="left:35.79px;top:841.00px;font-size:7.2px;line-height:7.2px;color:#8a8a8a;">15k</div>
<div class="t" style="left:29.79px;top:873.00px;font-size:7.2px;line-height:7.2px;color:#8a8a8a;">12.5k</div>
<div class="t" style="left:35.79px;top:904.00px;font-size:7.2px;line-height:7.2px;color:#8a8a8a;">10k</div>
<div class="t" style="left:33.79px;top:936.00px;font-size:7.2px;line-height:7.2px;color:#8a8a8a;">7.5k</div>
<div class="t" style="left:39.80px;top:968.00px;font-size:7.2px;line-height:7.2px;color:#8a8a8a;">5k</div>
<div class="t" style="left:33.79px;top:1000.00px;font-size:7.2px;line-height:7.2px;color:#8a8a8a;">2.5k</div>
<div class="t" style="left:43.40px;top:1031.00px;font-size:7.2px;line-height:7.2px;color:#8a8a8a;">0</div>
<svg class="b" style="left:0;top:740px" width="1394" height="320" viewBox="0 740 1394 320"><polygon points="58,801.9 244.6,788.5 431.5,792.6 618.7,794.7 806,796.2 993,793.2 1180,794.1 1367.7,793.2 1367.7,1033 58,1033" fill="#a67f5d"/><polygon points="58,849.8 244.6,839.6 431.5,843.2 618.7,843.2 806,843.2 993,842.3 1180,842.3 1367.7,843.2 1367.7,1033 58,1033" fill="#7f3fa8"/><polygon points="58,884.7 244.6,876.8 431.5,880.0 618.7,880.0 806,880.6 993,882.1 1180,876.1 1367.7,880.0 1367.7,1033 58,1033" fill="#4b7ec7"/><polygon points="58,905.9 244.6,902.0 431.5,907.1 618.7,905.0 806,906.2 993,905.6 1180,902.6 1367.7,904.1 1367.7,1033 58,1033" fill="#41afa6"/><polygon points="58,928.4 244.6,926.2 431.5,929.7 618.7,928.8 806,929.7 993,930.3 1180,928.2 1367.7,927.6 1367.7,1033 58,1033" fill="#fbc066"/><polygon points="58,953.3 244.6,951.3 431.5,953.8 618.7,950.8 806,952.9 993,951.4 1180,952.9 1367.7,953.8 1367.7,1033 58,1033" fill="#ef9e63"/><polygon points="58,976.3 244.6,974.0 431.5,978.5 618.7,974.0 806,975.5 993,975.5 1180,977.3 1367.7,977.9 1367.7,1033 58,1033" fill="#ee89a6"/><polygon points="58,995.7 244.6,993.1 431.5,998.1 618.7,993.6 806,994.5 993,994.5 1180,996.0 1367.7,997.5 1367.7,1033 58,1033" fill="#64cf9a"/><polygon points="58,1008.7 244.6,1006.3 431.5,1010.4 618.7,1006.5 806,1008.0 993,1007.4 1180,1008.6 1367.7,1010.1 1367.7,1033 58,1033" fill="#f8d67f"/><polygon points="58,1021.2 244.6,1020.0 431.5,1021.6 618.7,1020.1 806,1021.0 993,1020.1 1180,1021.0 1367.7,1021.6 1367.7,1033 58,1033" fill="#adbdf7"/><polyline points="58,801.9 244.6,788.5 431.5,792.6 618.7,794.7 806,796.2 993,793.2 1180,794.1 1367.7,793.2" fill="none" stroke="#94694a" stroke-width="0.7"/><polyline points="58,849.8 244.6,839.6 431.5,843.2 618.7,843.2 806,843.2 993,842.3 1180,842.3 1367.7,843.2" fill="none" stroke="#6c2f93" stroke-width="0.7"/><polyline points="58,884.7 244.6,876.8 431.5,880.0 618.7,880.0 806,880.6 993,882.1 1180,876.1 1367.7,880.0" fill="none" stroke="#4274bd" stroke-width="0.7"/><polyline points="58,905.9 244.6,902.0 431.5,907.1 618.7,905.0 806,906.2 993,905.6 1180,902.6 1367.7,904.1" fill="none" stroke="#3aa39b" stroke-width="0.7"/><polyline points="58,928.4 244.6,926.2 431.5,929.7 618.7,928.8 806,929.7 993,930.3 1180,928.2 1367.7,927.6" fill="none" stroke="#f2b45a" stroke-width="0.7"/><polyline points="58,953.3 244.6,951.3 431.5,953.8 618.7,950.8 806,952.9 993,951.4 1180,952.9 1367.7,953.8" fill="none" stroke="#e69258" stroke-width="0.7"/><polyline points="58,976.3 244.6,974.0 431.5,978.5 618.7,974.0 806,975.5 993,975.5 1180,977.3 1367.7,977.9" fill="none" stroke="#e57d9b" stroke-width="0.7"/><polyline points="58,995.7 244.6,993.1 431.5,998.1 618.7,993.6 806,994.5 993,994.5 1180,996.0 1367.7,997.5" fill="none" stroke="#58c38e" stroke-width="0.7"/><polyline points="58,1008.7 244.6,1006.3 431.5,1010.4 618.7,1006.5 806,1008.0 993,1007.4 1180,1008.6 1367.7,1010.1" fill="none" stroke="#efca70" stroke-width="0.7"/><polyline points="58,1021.2 244.6,1020.0 431.5,1021.6 618.7,1020.1 806,1021.0 993,1020.1 1180,1021.0 1367.7,1021.6" fill="none" stroke="#9fb0f0" stroke-width="0.7"/><rect x="58" y="1038.5" width="1310" height="1" fill="#e1e6f2"/></svg>
<div class="t" style="left:48.47px;top:1046.00px;font-size:7.3px;line-height:7.3px;color:#8a8a8a;">Nov 6</div>
<div class="t" style="left:235.07px;top:1046.00px;font-size:7.3px;line-height:7.3px;color:#8a8a8a;">Nov 7</div>
<div class="t" style="left:421.97px;top:1046.00px;font-size:7.3px;line-height:7.3px;color:#8a8a8a;">Nov 8</div>
<div class="t" style="left:609.17px;top:1046.00px;font-size:7.3px;line-height:7.3px;color:#8a8a8a;">Nov 9</div>
<div class="t" style="left:794.44px;top:1046.00px;font-size:7.3px;line-height:7.3px;color:#8a8a8a;">Nov 10</div>
<div class="t" style="left:981.71px;top:1046.00px;font-size:7.3px;line-height:7.3px;color:#8a8a8a;">Nov 11</div>
<div class="t" style="left:1168.44px;top:1046.00px;font-size:7.3px;line-height:7.3px;color:#8a8a8a;">Nov 12</div>
<div class="t" style="left:1344.57px;top:1046.00px;font-size:7.3px;line-height:7.3px;color:#8a8a8a;">Nov 13</div>
<div class="b" style="left:11px;top:1090px;width:1375px;height:260px;background:#fff;border:1px solid #e3e5e9;border-radius:3px;box-sizing:border-box"></div>
<div class="t" style="left:28.60px;top:1107.00px;font-size:9.68px;line-height:9.68px;color:#333;">Group by</div>
<div class="b" style="left:75px;top:1101px;width:48px;height:24px;border:1px solid #e1e3e7;border-radius:3px;box-sizing:border-box;background:#fff"></div><div class="t" style="left:81.00px;top:1107.00px;font-size:9.53px;line-height:9.53px;color:#2e2e2e;">Creative</div>
<div class="b" style="left:1072px;top:1107px;width:22px;height:11px;background:#8d8d8d;border-radius:5.5px"></div>
<div class="b" style="left:1073px;top:1108px;width:9px;height:9px;background:#fff;border-radius:50%"></div>
<div class="t" style="left:1102.10px;top:1108.00px;font-size:8.82px;line-height:8.82px;color:#555;">Show creatives with previews only</div>
<div class="b" style="left:1250px;top:1104px;width:1px;height:15px;background:#e3e4e7"></div>
<svg class="b" style="left:1268px;top:1106px" width="15" height="13" viewBox="0 0 15 13"><path d="M3 2.5 V10.5" stroke="#5a5a5a" stroke-width="1"/><path d="M0.9 3.4 L3 1.2 L5.1 3.4 Z M0.9 9.6 L3 11.8 L5.1 9.6 Z" fill="#5a5a5a"/><path d="M6.5 3.5 H13.5 M6.5 6.5 H13.5 M6.5 9.5 H13.5" stroke="#5a5a5a" stroke-width="1"/></svg>
<svg class="b" style="left:1299px;top:1106px" width="9" height="13" viewBox="0 0 9 13"><path d="M1.2 4.6 L4.5 1.3 L7.8 4.6 M1.2 8.4 L4.5 11.7 L7.8 8.4" fill="none" stroke="#5a5a5a" stroke-width="1.1"/></svg>
<svg class="b" style="left:1326px;top:1106px" width="13" height="13" viewBox="0 0 24 24"><path d="M19.14 12.94c.04-.3.06-.61.06-.94 0-.32-.02-.64-.07-.94l2.03-1.58a.49.49 0 0 0 .12-.61l-1.920-3.32a.488.488 0 0 0-.59-.22l-2.39.96c-.5-.38-1.030-.7-1.62-.94l-.36-2.54a.484.484 0 0 0-.48-.41h-3.84c-.24 0-.43.17-.47.41l-.36 2.54c-.59.24-1.13.57-1.62.94l-2.39-.96c-.22-.08-.47 0-.59.22L2.74 8.87c-.12.21-.08.47.12.61l2.03 1.58c-.05.3-.09.63-.09.94s.02.64.07.94l-2.03 1.58a.49.49 0 0 0-.12.61l1.92 3.32c.12.22.37.29.59.22l2.39-.96c.5.38 1.03.7 1.62.94l.36 2.54c.05.24.24.41.48.41h3.84c.24 0 .44-.17.47-.41l.36-2.54c.59-.24 1.13-.56 1.62-.94l2.39.96c.22.08.47 0 .59-.22l1.92-3.32c.12-.22.07-.47-.12-.61l-2.010-1.58z" fill="none" stroke="#5a5a5a" stroke-width="2.3"/><circle cx="12" cy="12" r="3.4" fill="none" stroke="#5a5a5a" stroke-width="2.3"/></svg>
<svg class="b" style="left:1358px;top:1107px" width="10" height="11" viewBox="0 0 10 11"><path d="M3.2 0.5 H6.8 V4.2 H9 L5 8 L1 4.2 H3.2 Z" fill="#5a5a5a"/><path d="M0.8 9.5 H9.2" stroke="#5a5a5a" stroke-width="1.1"/></svg>
<div class="b" style="left:12px;top:1135px;width:1373px;height:1px;background:#eceef1"></div>
<div class="b" style="left:12px;top:1174px;width:1373px;height:34px;background:#e6f3fc;border-top:1px solid #dfe7ee;border-bottom:1px solid #dfe7ee;box-sizing:border-box"></div>
<div class="b" style="left:12px;top:1251px;width:1373px;height:1px;background:#e6e8ec"></div>
<div class="b" style="left:240px;top:1136px;width:1px;height:150px;background:#e6e8ec"></div>
<div class="t" style="left:28.60px;top:1152.00px;font-size:9px;line-height:9px;color:#333;transform:scaleX(0.9728);transform-origin:0 0;">Creative</div>
<div class="t" style="left:252.00px;top:1152.00px;font-size:9px;line-height:9px;color:#333;transform:scaleX(0.9828);transform-origin:0 0;">Media source</div>
<div class="t" style="left:384.90px;top:1152.00px;font-size:9px;line-height:9px;color:#333;transform:scaleX(0.9799);transform-origin:0 0;">Campaign</div>
<div class="t" style="left:579.50px;top:1152.00px;font-size:9px;line-height:9px;color:#333;transform:scaleX(0.9749);transform-origin:0 0;">Impressions</div>
<div class="t" style="left:679.60px;top:1152.00px;font-size:9px;line-height:9px;color:#333;transform:scaleX(1.0042);transform-origin:0 0;">Clicks</div>
<div class="t" style="left:752.50px;top:1152.00px;font-size:9px;line-height:9px;color:#333;transform:scaleX(0.9746);transform-origin:0 0;">Installs</div>
<div class="t" style="left:829.40px;top:1152.00px;font-size:9px;line-height:9px;color:#333;transform:scaleX(0.8975);transform-origin:0 0;">CTR</div>
<div class="t" style="left:894.00px;top:1152.00px;font-size:9px;line-height:9px;color:#333;transform:scaleX(0.9052);transform-origin:0 0;">CVR</div>
<div class="t" style="left:959.10px;top:1152.00px;font-size:9px;line-height:9px;color:#333;transform:scaleX(0.9500);transform-origin:0 0;">IPM</div>
<div class="t" style="left:1021.60px;top:1152.00px;font-size:9px;line-height:9px;color:#333;transform:scaleX(1.0105);transform-origin:0 0;">Cost</div>
<div class="t" style="left:1088.50px;top:1152.00px;font-size:9px;line-height:9px;color:#333;transform:scaleX(0.9446);transform-origin:0 0;">eCPI</div>
<div class="t" style="left:1155.50px;top:1152.00px;font-size:9px;line-height:9px;color:#333;transform:scaleX(1.0235);transform-origin:0 0;">Re-attributions</div>
<div class="t" style="left:1270.50px;top:1152.00px;font-size:9px;line-height:9px;color:#333;transform:scaleX(0.9820);transform-origin:0 0;">Re-engagements</div>
<svg class="b" style="left:1044px;top:1151px" width="9" height="10" viewBox="0 0 9 10"><path d="M4.5 0.8 V9 M1.2 5.6 L4.5 9 L7.8 5.6" fill="none" stroke="#666" stroke-width="1"/></svg>
<div class="t" style="left:28.60px;top:1187.00px;font-size:8.8px;line-height:8.8px;color:#1e1e1e;-webkit-text-stroke:0.12px #1e1e1e;transform:scaleX(1.0136);transform-origin:0 0;">Totals</div>
<div class="t" style="left:579.50px;top:1187.00px;font-size:8.8px;line-height:8.8px;color:#1e1e1e;-webkit-text-stroke:0.12px #1e1e1e;transform:scaleX(1.0268);transform-origin:0 0;">3,098,943</div>
<div class="t" style="left:679.60px;top:1187.00px;font-size:8.8px;line-height:8.8px;color:#1e1e1e;-webkit-text-stroke:0.12px #1e1e1e;transform:scaleX(1.0031);transform-origin:0 0;">94,126</div>
<div class="t" style="left:752.50px;top:1187.00px;font-size:8.8px;line-height:8.8px;color:#1e1e1e;-webkit-text-stroke:0.12px #1e1e1e;transform:scaleX(0.9920);transform-origin:0 0;">21,289</div>
<div class="t" style="left:829.40px;top:1187.00px;font-size:8.8px;line-height:8.8px;color:#1e1e1e;-webkit-text-stroke:0.12px #1e1e1e;transform:scaleX(0.9538);transform-origin:0 0;">3.04%</div>
<div class="t" style="left:894.00px;top:1187.00px;font-size:8.8px;line-height:8.8px;color:#1e1e1e;-webkit-text-stroke:0.12px #1e1e1e;transform:scaleX(0.9582);transform-origin:0 0;">23.49%</div>
<div class="t" style="left:959.10px;top:1187.00px;font-size:8.8px;line-height:8.8px;color:#1e1e1e;-webkit-text-stroke:0.12px #1e1e1e;transform:scaleX(0.8875);transform-origin:0 0;">7.13</div>
<div class="t" style="left:1021.50px;top:1187.00px;font-size:8.8px;line-height:8.8px;color:#1e1e1e;-webkit-text-stroke:0.12px #1e1e1e;transform:scaleX(0.9944);transform-origin:0 0;">$224,517</div>
<div class="t" style="left:1088.50px;top:1187.00px;font-size:8.8px;line-height:8.8px;color:#1e1e1e;-webkit-text-stroke:0.12px #1e1e1e;transform:scaleX(0.9660);transform-origin:0 0;">$10.16</div>
<div class="t" style="left:1155.50px;top:1187.00px;font-size:8.8px;line-height:8.8px;color:#1e1e1e;-webkit-text-stroke:0.12px #1e1e1e;transform:scaleX(1.0216);transform-origin:0 0;">244</div>
<div class="t" style="left:1270.50px;top:1187.00px;font-size:8.8px;line-height:8.8px;color:#1e1e1e;-webkit-text-stroke:0.12px #1e1e1e;transform:scaleX(0.9263);transform-origin:0 0;">573</div>
<svg class="b" style="left:31px;top:1224.3px" width="6" height="9"><path d="M1.2 1 L4.6 4.5 L1.2 8" fill="none" stroke="#333" stroke-width="1.2"/></svg>
<svg class="b" style="left:44px;top:1218px" width="28" height="25" viewBox="0 0 28 25"><rect x="0.5" y="0.5" width="21" height="21" rx="5" fill="#fff" stroke="#e6e8ec"/><rect x="1.5" y="5" width="19" height="11.5" fill="#c9965f"/><path d="M1.5 5 H20.5 V7.5 H1.5 Z" fill="#88a5c0"/><path d="M3 10 H9 V12.5 H3 Z M11 12 H18 V14.5 H11 Z" fill="#6b4a2e"/><circle cx="19.5" cy="19" r="5" fill="#fff"/><rect x="17" y="17.3" width="4.2" height="3.4" fill="none" stroke="#777" stroke-width="0.8"/><path d="M21.2 18.1 L22.5 17.5 V20.5 L21.2 19.9" fill="#777"/></svg>
<div class="t" style="left:76.50px;top:1225.00px;font-size:8.8px;line-height:8.8px;color:#555;transform:scaleX(0.9777);transform-origin:0 0;">AppsFlyerGaming_JIO_15sec_10...</div>
<div class="t" style="left:219.40px;top:1225.00px;font-size:8.8px;line-height:8.8px;color:#555;transform:scaleX(0.9298);transform-origin:0 0;">(4)</div>
<div class="t" style="left:252.00px;top:1225.00px;font-size:8.8px;line-height:8.8px;color:#555;transform:scaleX(1.0156);transform-origin:0 0;">unityads_int</div>
<div class="b" style="left:308px;top:1223px;width:16px;height:12px;background:#eef2f8;border-radius:6px"></div><div class="t" style="left:311.50px;top:1226.00px;font-size:8.16px;line-height:8.16px;color:#4a72ad;">+2</div>
<div class="t" style="left:384.90px;top:1225.00px;font-size:8.8px;line-height:8.8px;color:#555;transform:scaleX(0.9661);transform-origin:0 0;">AF_BI_UNITY_US_VO_RON_T...</div>
<div class="b" style="left:522px;top:1223px;width:16px;height:12px;background:#eef2f8;border-radius:6px"></div><div class="t" style="left:525.00px;top:1226.00px;font-size:8.16px;line-height:8.16px;color:#4a72ad;">+3</div>
<div class="t" style="left:579.50px;top:1225.00px;font-size:8.8px;line-height:8.8px;color:#555;transform:scaleX(0.9808);transform-origin:0 0;">504,738</div>
<div class="t" style="left:679.60px;top:1225.00px;font-size:8.8px;line-height:8.8px;color:#555;transform:scaleX(0.9808);transform-origin:0 0;">12,596</div>
<div class="t" style="left:752.50px;top:1225.00px;font-size:8.8px;line-height:8.8px;color:#555;transform:scaleX(0.9536);transform-origin:0 0;">3,122</div>
<div class="t" style="left:829.40px;top:1225.00px;font-size:8.8px;line-height:8.8px;color:#555;transform:scaleX(0.8874);transform-origin:0 0;">2.5%</div>
<div class="t" style="left:894.00px;top:1225.00px;font-size:8.8px;line-height:8.8px;color:#555;transform:scaleX(0.9415);transform-origin:0 0;">24.79%</div>
<div class="t" style="left:959.10px;top:1225.00px;font-size:8.8px;line-height:8.8px;color:#555;transform:scaleX(0.9400);transform-origin:0 0;">6.19</div>
<div class="t" style="left:1021.50px;top:1225.00px;font-size:8.8px;line-height:8.8px;color:#555;transform:scaleX(0.9494);transform-origin:0 0;">$31,103</div>
<div class="t" style="left:1088.50px;top:1225.00px;font-size:8.8px;line-height:8.8px;color:#555;transform:scaleX(0.9899);transform-origin:0 0;">$9.96</div>
<div class="t" style="left:1155.50px;top:1225.00px;font-size:8.8px;line-height:8.8px;color:#555;transform:scaleX(1.0225);transform-origin:0 0;">N/A</div>
<div class="t" style="left:1270.50px;top:1225.00px;font-size:8.8px;line-height:8.8px;color:#555;transform:scaleX(1.0225);transform-origin:0 0;">N/A</div>
<svg class="b" style="left:31px;top:1267.7px" width="6" height="9"><path d="M1.2 1 L4.6 4.5 L1.2 8" fill="none" stroke="#333" stroke-width="1.2"/></svg>
<svg class="b" style="left:44px;top:1261px" width="28" height="25" viewBox="0 0 28 25"><rect x="0.5" y="0.5" width="21" height="21" rx="5" fill="#fff" stroke="#e6e8ec"/><rect x="1.5" y="5" width="19" height="11.5" fill="#1a2a5a"/><path d="M1.5 9 Q10 7 20.5 10 V13 Q10 11 1.5 13 Z" fill="#2fa7b6"/><path d="M6 6 H14 V8 H6 Z" fill="#dfe6f0"/><circle cx="19.5" cy="19" r="5" fill="#fff"/><rect x="16.8" y="16.3" width="5.4" height="5.4" fill="none" stroke="#777" stroke-width="0.8"/><path d="M17.1 21.4 L19 19 L20.1 20.1 L21.9 18.3 V21.4 Z" fill="#777"/></svg>
<div class="t" style="left:76.50px;top:1268.00px;font-size:8.8px;line-height:8.8px;color:#555;transform:scaleX(0.9884);transform-origin:0 0;">AF_NascarTheme1_800X800.jpg</div>
<div class="t" style="left:211.50px;top:1268.00px;font-size:8.8px;line-height:8.8px;color:#555;transform:scaleX(0.9019);transform-origin:0 0;">(2)</div>
<div class="t" style="left:252.00px;top:1268.00px;font-size:8.8px;line-height:8.8px;color:#555;transform:scaleX(0.9683);transform-origin:0 0;">Facebook Ads</div>
<div class="b" style="left:315px;top:1266px;width:16px;height:12px;background:#eef2f8;border-radius:6px"></div><div class="t" style="left:318.40px;top:1269.00px;font-size:8.16px;line-height:8.16px;color:#4a72ad;">+1</div>
<div class="t" style="left:384.90px;top:1268.00px;font-size:8.8px;line-height:8.8px;color:#555;transform:scaleX(0.9471);transform-origin:0 0;">AF_AAA_FB_US_TCPA_291022...</div>
<div class="b" style="left:523px;top:1266px;width:16px;height:12px;background:#eef2f8;border-radius:6px"></div><div class="t" style="left:525.80px;top:1269.00px;font-size:8.16px;line-height:8.16px;color:#4a72ad;">+1</div>
<div class="t" style="left:579.50px;top:1268.00px;font-size:8.8px;line-height:8.8px;color:#555;transform:scaleX(0.9462);transform-origin:0 0;">235,168</div>
<div class="t" style="left:679.60px;top:1268.00px;font-size:8.8px;line-height:8.8px;color:#555;transform:scaleX(1.0172);transform-origin:0 0;">8,328</div>
<div class="t" style="left:752.50px;top:1268.00px;font-size:8.8px;line-height:8.8px;color:#555;transform:scaleX(0.9536);transform-origin:0 0;">1,520</div>
<div class="t" style="left:829.40px;top:1268.00px;font-size:8.8px;line-height:8.8px;color:#555;transform:scaleX(0.9218);transform-origin:0 0;">3.54%</div>
<div class="t" style="left:894.00px;top:1268.00px;font-size:8.8px;line-height:8.8px;color:#555;transform:scaleX(0.9147);transform-origin:0 0;">18.25%</div>
<div class="t" style="left:959.10px;top:1268.00px;font-size:8.8px;line-height:8.8px;color:#555;transform:scaleX(1.0042);transform-origin:0 0;">6.46</div>
<div class="t" style="left:1021.50px;top:1268.00px;font-size:8.8px;line-height:8.8px;color:#555;transform:scaleX(1.0123);transform-origin:0 0;">$23,007</div>
<div class="t" style="left:1088.50px;top:1268.00px;font-size:8.8px;line-height:8.8px;color:#555;transform:scaleX(0.9140);transform-origin:0 0;">$15.14</div>
<div class="t" style="left:1155.50px;top:1268.00px;font-size:8.8px;line-height:8.8px;color:#555;transform:scaleX(1.0225);transform-origin:0 0;">N/A</div>
<div class="t" style="left:1270.50px;top:1268.00px;font-size:8.8px;line-height:8.8px;color:#555;transform:scaleX(1.0225);transform-origin:0 0;">N/A</div>
</body></html>
